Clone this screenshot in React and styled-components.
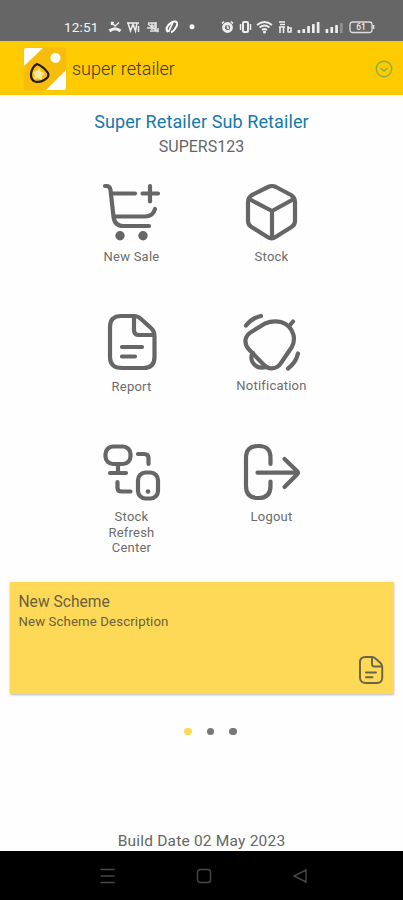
import styled, { createGlobalStyle } from 'styled-components'

const GlobalStyle = createGlobalStyle`
  * {
    box-sizing: border-box;
  }

  body {
    margin: 0;
    background: #fefefe;
    font-family: Roboto, 'Liberation Sans', sans-serif;
    color: #666;
  }
`

const Screen = styled.div`
  display: flex;
  flex-direction: column;
  width: 403px;
  height: 900px;
  overflow: hidden;
`

const StatusBar = styled.div`
  display: flex;
  align-items: center;
  justify-content: space-between;
  height: 41px;
  padding: 12px 28px 0 64px;
  background: #666;
  color: #f4f4f4;
`

const StatusGroup = styled.div`
  display: flex;
  align-items: center;
  gap: ${({ $gap }) => $gap}px;

  svg {
    display: block;
  }
`

const Clock = styled.span`
  width: 36px;
  margin-right: 2px;
  font-size: 13.5px;
  line-height: 16px;
  letter-spacing: 0.15px;
  white-space: nowrap;
`

const Header = styled.header`
  display: flex;
  align-items: center;
  height: 54px;
  padding: 2px 10px 0 23px;
  background: #fecb00;
`

const Logo = styled.svg`
  display: block;
  width: 44px;
  height: 44px;
  margin-right: 5px;
`

const AppName = styled.h1`
  flex: 1;
  margin: 0;
  font-size: 18px;
  font-weight: 300;
  line-height: 22px;
  color: #3f3a20;
`

const Main = styled.main`
  display: flex;
  flex: 1;
  flex-direction: column;
  align-items: center;
  min-height: 0;
`

const UserName = styled.h2`
  margin: 15px 0 0;
  font-size: 18px;
  font-weight: 400;
  line-height: 24px;
  letter-spacing: 0.1px;
  color: #1579ac;
`

const UserCode = styled.div`
  margin-top: 3px;
  font-size: 16px;
  line-height: 20px;
`

const Menu = styled.nav`
  display: grid;
  grid-template-columns: repeat(2, 140px);
  grid-template-rows: 130px 130px 140px;
  margin-top: 25px;
`

const MenuButton = styled.button`
  display: flex;
  flex-direction: column;
  align-items: center;
  gap: ${({ $gap }) => $gap}px;
  padding: 0;
  border: 0;
  background: none;
  color: #6c6c6c;
  font: inherit;
`

const MenuIcon = styled.svg`
  display: block;
  width: 60px;
  height: 60px;
  fill: none;
  stroke: #666;
  stroke-width: 4.2;
  stroke-linecap: round;
  stroke-linejoin: round;
`

const MenuLabel = styled.span`
  width: ${({ $narrow }) => ($narrow ? '60px' : 'auto')};
  font-size: 13px;
  line-height: 15.7px;
  letter-spacing: 0.22px;
  text-align: center;
`

const SchemeCard = styled.section`
  display: flex;
  flex-direction: column;
  align-self: stretch;
  height: 112px;
  margin: 0 9px 0 9.5px;
  padding: 10px 9px;
  background: #fed957;
  box-shadow: 0 1px 2px rgba(0, 0, 0, 0.28);
`

const SchemeTitle = styled.h3`
  margin: 0;
  font-size: 15.6px;
  font-weight: 400;
  line-height: 20px;
  color: #6b603d;
`

const SchemeText = styled.p`
  margin: 1px 0 0;
  font-size: 13.2px;
  line-height: 18px;
  letter-spacing: 0.13px;
  color: #6b603d;
`

const SchemeIcon = styled.svg`
  display: block;
  width: 30px;
  height: 30px;
  margin: auto -1px -1px auto;
  fill: none;
  stroke: #6a6444;
  stroke-width: 3.8;
  stroke-linecap: round;
  stroke-linejoin: round;
`

const Dots = styled.div`
  display: flex;
  gap: 15px;
  margin: 34px 0 0 18px;
`

const Dot = styled.span`
  width: 7.4px;
  height: 7.4px;
  border-radius: 50%;
  background: ${({ $active }) => ($active ? '#fed957' : '#777')};
`

const BuildDate = styled.div`
  margin-top: auto;
  font-size: 15.5px;
  line-height: 20px;
  letter-spacing: 0.2px;
`

const NavBar = styled.footer`
  display: flex;
  align-items: center;
  justify-content: space-between;
  height: 49px;
  padding: 1px 95px 0 99px;
  background: #000;

  svg {
    display: block;
    fill: none;
    stroke: #484848;
    stroke-width: 1.4;
  }
`

// All menu drawings share a 60x60 box
const icons = {
  sale: (
    <>
      <path d="M3 4h1.500q3.500 0 4 4L11.500 34.500q1 9.500 10 9.500h25.500" />
      <path d="M11 11.500h22M13 34.500h30q8 0 10-7.500M48 4v15.500M40.500 11.500h15.500" />
      <circle cx="18" cy="53.700" r="4.700" fill="#666" stroke="none" />
      <circle cx="41" cy="53.700" r="4.700" fill="#666" stroke="none" />
    </>
  ),
  stock: (
    <>
      <path d="M26 5 10 13q-4 2.500-4 7v19q0 4 3.500 6l16 10q4 2.500 8 0l16-10q3.500-2 3.500-6V20q0-4.500-4-7L34 5q-4-2-8 0z" />
      <path d="m8 17.500 22 11.500 21-11.500M30 29v27" />
    </>
  ),
  report: (
    <>
      <path d="M19 4h13q4 0 7 3l10 9q3.500 3 3.500 8v21q0 11-11 11H20Q8 56 8 45V15Q8 4 19 4z" />
      <path d="M32 5v13q0 5 5 5h14M20 35h20M20 44.500h13" />
    </>
  ),
  notification: (
    <>
      <path d="M23 11.500q8-3.500 16-1.500 10 3 12.500 13 1.500 7-2 12.500L39 51q-3 5-9 5.300-5 .2-9-4.300L7 37.500Q3 33.500 3.500 28q.5-5 6.500-8.500z" />
      <path d="M11 41q-3 4-.5 9 4 7.500 14 5M48 13l3-3.500M4 13.500Q10 6 19 4M46 56.500q8-6 10-15" />
    </>
  ),
  refresh: (
    <>
      <rect x="3.500" y="4.500" width="25" height="17.500" rx="7.500" />
      <path d="M16 22v9M8 31h16M36 12h6q4.500 0 4.500 4v6M15.500 40v6q0 3.500 4 3.500h9" />
      <rect x="36" y="30.500" width="20" height="26" rx="7.500" />
      <circle cx="46" cy="49.500" r="2.300" fill="#666" stroke="none" />
    </>
  ),
  logout: (
    <>
      <path d="M28.500 22v-6Q28.500 4 17 4h-1Q4 4 4 16v28q0 12 12 12h1q11.500 0 11.500-12v-4.500" />
      <path d="M15.500 30.700H55M42.500 17l12.500 12q2 1.700 0 3.400L42.500 45" />
    </>
  ),
}

const menu = [
  { icon: 'sale', label: 'New Sale' },
  { icon: 'stock', label: 'Stock' },
  { icon: 'report', label: 'Report' },
  { icon: 'notification', label: 'Notification', gap: 6 },
  { icon: 'refresh', label: 'Stock Refresh Center', narrow: true },
  { icon: 'logout', label: 'Logout' },
]

function SignalBars({ heights, faded }) {
  return (
    <svg width={heights.length * 4.8} height="14">
      {heights.map((h, i) => (
        <rect
          key={i}
          x={i * 4.8 + 0.6}
          y={13 - h}
          width="2.7"
          height={h}
          rx="0.6"
          fill="#eee"
          opacity={i === faded ? 0.3 : 1}
        />
      ))}
    </svg>
  )
}

function Status() {
  return (
    <StatusBar>
      <StatusGroup $gap={5.5}>
        <Clock>12:51</Clock>
        <svg width="14" height="14" fill="none" stroke="#eee">
          <path d="m3.500 2.500 3.500 3.500 4-3.500M3.500 5V2.500H6" strokeWidth="1.300" />
          <path d="M1.500 11q5.500-4.500 11 0" strokeWidth="3" />
        </svg>
        <svg width="13" height="14" fill="none" stroke="#eee" strokeWidth="1.500">
          <path d="m1 3 2.500 8L6 4l2.500 7L10 3M11.500 6v6M0 3h12" />
        </svg>
        <svg width="14" height="14" fill="none" stroke="#e4e4e4" strokeWidth="1.500">
          <path d="M2 3h7v3H4M1 8h9M4 11h8M10 2v9M6 3v7M12 8v4M2 4l10 8" />
        </svg>
        <svg width="14" height="14" fill="none" stroke="#fff">
          <path d="M3 12Q0 9 3.500 5 7 1 10.500 1.500 14 3 10.500 8 8 12 6 12" strokeWidth="2" />
          <path d="M3.500 12 7.500 3" strokeWidth="1.800" />
        </svg>
        <svg width="14" height="14">
          <circle cx="7" cy="6.700" r="2.500" fill="#fff" />
        </svg>
      </StatusGroup>
      <StatusGroup $gap={4.6}>
        <svg width="13" height="14" fill="none" stroke="#eee">
          <circle cx="6.500" cy="7.500" r="4" strokeWidth="2.800" />
          <path d="m1 3.500 2-2M12 3.500l-2-2M6.500 5.500v2.200l1.500.8" strokeWidth="1.600" />
        </svg>
        <svg width="13" height="14" fill="none" stroke="#eee" strokeWidth="1.500">
          <rect x="4" y="2" width="5" height="10" rx="1" strokeWidth="2" />
          <path d="M1.500 4v6M11.500 4v6" />
        </svg>
        <svg width="17" height="14" fill="none" stroke="#eee" strokeWidth="1.700">
          <path d="M1 5q7.500-6 15 0M3.500 7.500q5-4 10 0M6 10q2.500-2 5 0" />
          <circle cx="8.500" cy="12" r="0.700" />
        </svg>
        <svg width="14" height="14" fill="none" stroke="#eee" strokeWidth="1.600">
          <path d="M1 2h6M2 4.500h5M1 7h6M2 7v6M5.500 7v6M10 6v6.500M10 8h3v4h-3" />
        </svg>
        <SignalBars heights={[3, 4, 7, 9, 11]} />
        <SignalBars heights={[4, 6, 8, 10]} faded={3} />
        <svg width="26" height="14" fill="none" stroke="#ddd" strokeWidth="1.300">
          <rect x="1" y="2" width="22" height="10.500" rx="2.500" />
          <path d="M24.500 5v4" strokeWidth="1.800" />
          <text
            x="12"
            y="10.300"
            fontSize="8.500"
            fontWeight="500"
            textAnchor="middle"
            fill="#eee"
            stroke="none"
          >
            61
          </text>
        </svg>
      </StatusGroup>
    </StatusBar>
  )
}

export default function App() {
  return (
    <>
      <GlobalStyle />
      <Screen>
        <Status />
        <Header>
          <Logo viewBox="0 0 44 44">
            <rect x="0.500" y="0.500" width="43" height="43" rx="3" fill="#f8bd0c" />
            <path d="M1 19V3q0-2 2-2h17zM23 43l20-20v18q0 2-2 2z" fill="#fff" />
            <circle cx="32.500" cy="11" r="5" fill="#fff" />
            <path
              d="M14 17q7 3 11 9 1.500 4-3 6.500-5 3.500-10 2-4.500-1.500-4-8 1-6.500 6-9.500z"
              fill="#fabd17"
              stroke="#211e13"
              strokeWidth="2.200"
            />
            <path d="m16 21 2 4 4 1-3 3v4l-4-2-4 1 1-4-2-3 4-1z" fill="#ffe9a0" />
          </Logo>
          <AppName>super retailer</AppName>
          <svg width="18" height="18" fill="none" stroke="#8cae45" strokeWidth="1.400">
            <circle cx="9" cy="9" r="7.700" />
            <path d="m5.500 8 3.500 3 3.500-3" />
          </svg>
        </Header>
        <Main>
          <UserName>Super Retailer Sub Retailer</UserName>
          <UserCode>SUPERS123</UserCode>
          <Menu>
            {menu.map(({ icon, label, narrow, gap = 7 }) => (
              <MenuButton key={icon} type="button" $gap={gap}>
                <MenuIcon viewBox="0 0 60 60">{icons[icon]}</MenuIcon>
                <MenuLabel $narrow={narrow}>{label}</MenuLabel>
              </MenuButton>
            ))}
          </Menu>
          <SchemeCard>
            <SchemeTitle>New Scheme</SchemeTitle>
            <SchemeText>New Scheme Description</SchemeText>
            <SchemeIcon viewBox="0 0 60 60">{icons.report}</SchemeIcon>
          </SchemeCard>
          <Dots>
            <Dot $active />
            <Dot />
            <Dot />
          </Dots>
          <BuildDate>Build Date 02 May 2023</BuildDate>
        </Main>
        <NavBar>
          <svg width="17" height="16">
            <path d="M1.500 1.500h14M1.500 8h14M1.500 14.500h14" />
          </svg>
          <svg width="16" height="16">
            <rect x="1.500" y="1.500" width="13" height="13" rx="2.500" />
          </svg>
          <svg width="16" height="16">
            <path d="M14 2v12L2 8z" />
          </svg>
        </NavBar>
      </Screen>
    </>
  )
}
